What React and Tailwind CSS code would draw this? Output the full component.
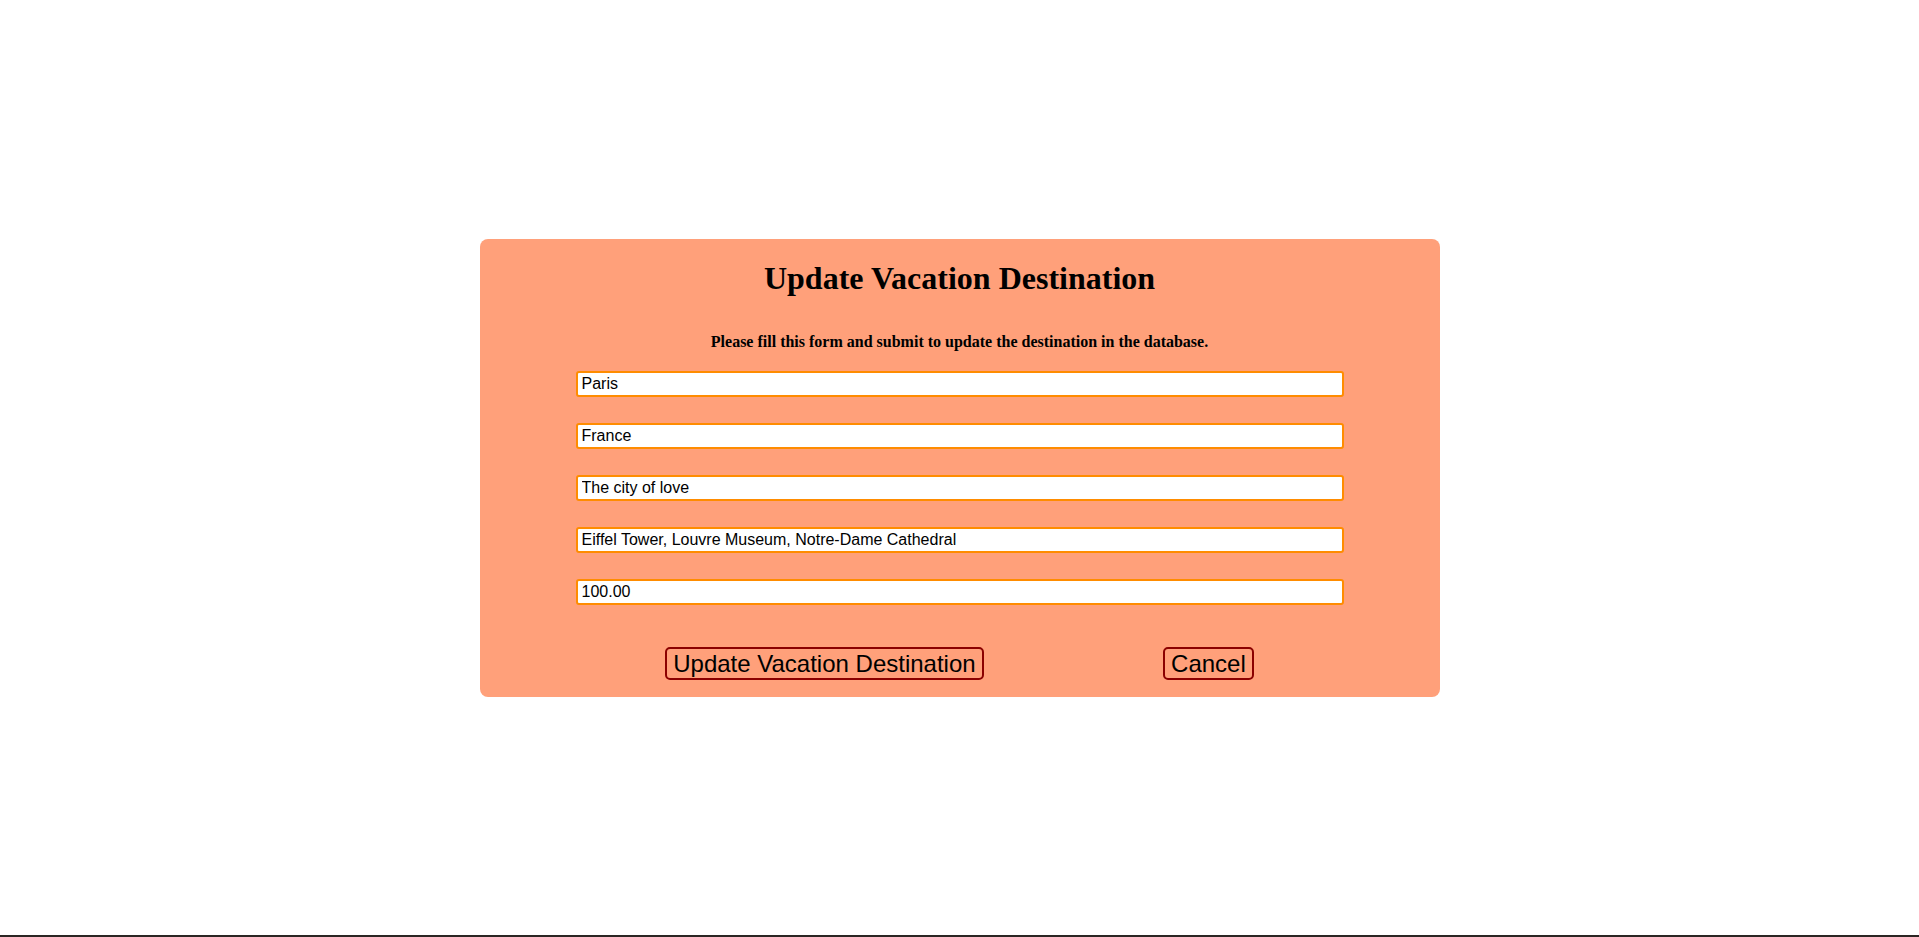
import { useState } from 'react';

const fields = [
  { name: 'name', value: 'Paris' },
  { name: 'country', value: 'France' },
  { name: 'description', value: 'The city of love' },
  { name: 'attractions', value: 'Eiffel Tower, Louvre Museum, Notre-Dame Cathedral' },
  { name: 'price', value: '100.00' },
];

const App = () => {
  const [form, setForm] = useState(
    Object.fromEntries(fields.map(f => [f.name, f.value]))
  );

  return (
    <div className="h-[937px] flex flex-col bg-white font-['Liberation_Sans',Arial,sans-serif] text-black">
      <div className="flex-1 flex justify-center pt-[239px]">
        <div className="w-[960px] h-[458px] bg-[#FFA07A] rounded-lg flex flex-col items-center">
          <h1 className="mt-[21px] h-[36px] leading-[36px] text-[32px] font-bold font-['Liberation_Serif','Times_New_Roman',serif]">
            Update Vacation Destination
          </h1>
          <h4 className="mt-[37px] h-[18px] leading-[18px] text-[16px] font-bold font-['Liberation_Serif','Times_New_Roman',serif]">
            Please fill this form and submit to update the destination in the database.
          </h4>
          <form className="w-[768px] mt-[20px] flex flex-col gap-[26px]" onSubmit={e => e.preventDefault()}>
            {fields.map(f => (
              <input
                key={f.name}
                type="text"
                value={form[f.name]}
                onChange={e => setForm({ ...form, [f.name]: e.target.value })}
                className="h-[26px] w-full bg-white border-2 border-[#FF8C00] rounded-[3px] px-1 text-[16px] leading-[18px] outline-none"
              />
            ))}
            <div className="flex justify-around mt-[16px]">
              <button type="submit" className="h-[33px] px-1.5 border-2 border-[#8B0000] rounded-[5px] text-[24px] leading-[27px]">
                Update Vacation Destination
              </button>
              <button type="button" className="h-[33px] px-1.5 border-2 border-[#8B0000] rounded-[5px] text-[24px] leading-[27px]">
                Cancel
              </button>
            </div>
          </form>
        </div>
      </div>
      <div className="h-[2px] bg-[#2b2623]"></div>
    </div>
  );
};

export default App;
